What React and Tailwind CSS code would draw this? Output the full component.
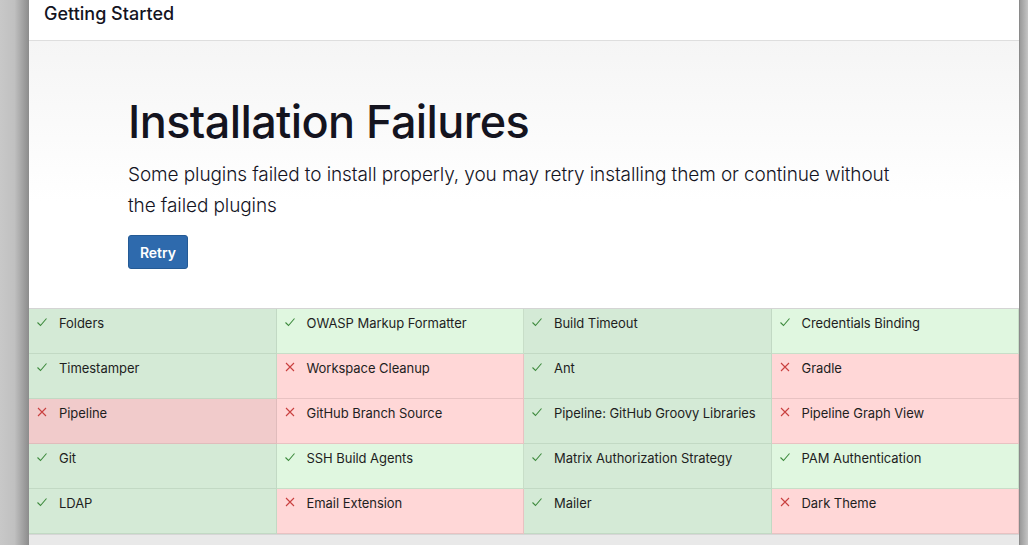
import React from 'react';

const plugins = [
  { name: 'Folders', ok: true },
  { name: 'OWASP Markup Formatter', ok: true },
  { name: 'Build Timeout', ok: true },
  { name: 'Credentials Binding', ok: true },
  { name: 'Timestamper', ok: true },
  { name: 'Workspace Cleanup', ok: false },
  { name: 'Ant', ok: true },
  { name: 'Gradle', ok: false },
  { name: 'Pipeline', ok: false },
  { name: 'GitHub Branch Source', ok: false },
  { name: 'Pipeline: GitHub Groovy Libraries', ok: true },
  { name: 'Pipeline Graph View', ok: false },
  { name: 'Git', ok: true },
  { name: 'SSH Build Agents', ok: true },
  { name: 'Matrix Authorization Strategy', ok: true },
  { name: 'PAM Authentication', ok: true },
  { name: 'LDAP', ok: true },
  { name: 'Email Extension', ok: false },
  { name: 'Mailer', ok: true },
  { name: 'Dark Theme', ok: false },
];

const Check = () => (
  <svg width="12" height="12" viewBox="0 0 12 12" fill="none" stroke="#3d8a3d" strokeWidth="1.1">
    <path d="M1.5 6.5 L4.5 9.5 L10.5 2.5" />
  </svg>
);

const Cross = () => (
  <svg width="12" height="12" viewBox="0 0 12 12" fill="none" stroke="#c9403f" strokeWidth="1.1">
    <path d="M2 2 L10 10 M10 2 L2 10" />
  </svg>
);

const cellClass = (ok, col) => {
  const odd = col % 2 === 0;
  if (ok) {
    return odd ? 'bg-[#d4ead6] border-[#c2d9c4]' : 'bg-[#e0f7e0] border-[#c8dec8]';
  }
  return odd ? 'bg-[#f1cbcb] border-[#e0bcbc]' : 'bg-[#ffd7d7] border-[#e8c2c2]';
};

const App = () => {
  return (
    <div className="flex h-[545px] w-[1028px] overflow-hidden bg-[#c4c4c4] font-['Inter',sans-serif]">
      <div className="w-[29px] shrink-0 bg-gradient-to-r from-[#c8c8c8] via-[#c0c0c0] to-[#8c8c8c]" />
      <div className="flex w-[990px] shrink-0 flex-col bg-[#e9e9e9]">
        <div className="h-[41px] border-b border-[#dedede] bg-white px-[15px] pt-[2px]">
          <h1 className="text-[18px] font-medium leading-[24px] text-[#14141f]">Getting Started</h1>
        </div>
        <div className="h-[267px] bg-gradient-to-b from-[#f5f5f5] to-white to-60% pl-[99px] pt-[53px]">
          <h2 className="text-[45px] font-medium leading-[56px] tracking-[-0.6px] text-[#14141f]">Installation Failures</h2>
          <p className="mt-[9px] w-[790px] text-[19px] font-light leading-[31px] tracking-[-0.1px] text-[#14141f]">
            Some plugins failed to install properly, you may retry installing them or continue without the failed plugins
          </p>
          <button className="mt-[14px] h-[34px] w-[60px] rounded-[3px] border border-[#245a95] bg-[#2e6aad] text-[14px] font-semibold text-white">
            Retry
          </button>
        </div>
        <div className="grid grid-cols-4 border-t border-[#d4d4d4]">
          {plugins.map((p, i) => (
            <div
              key={p.name}
              className={`flex h-[45px] items-start gap-[11px] border-b border-r pl-[7px] pt-[6px] ${cellClass(p.ok, i % 4)}`}
            >
              <span className="mt-[1px]">{p.ok ? <Check /> : <Cross />}</span>
              <span className="text-[13px] leading-[16px] tracking-[-0.05px] text-[#1e1e1e]">{p.name}</span>
            </div>
          ))}
        </div>
        <div className="flex-1 border-t border-[#d6d6d6] bg-[#e9e9e9]" />
      </div>
      <div className="w-[9px] shrink-0 border-l border-[#8a8a8a] bg-gradient-to-r from-[#9a9a9a] to-[#c4c4c4]" />
    </div>
  );
};

export default App;
